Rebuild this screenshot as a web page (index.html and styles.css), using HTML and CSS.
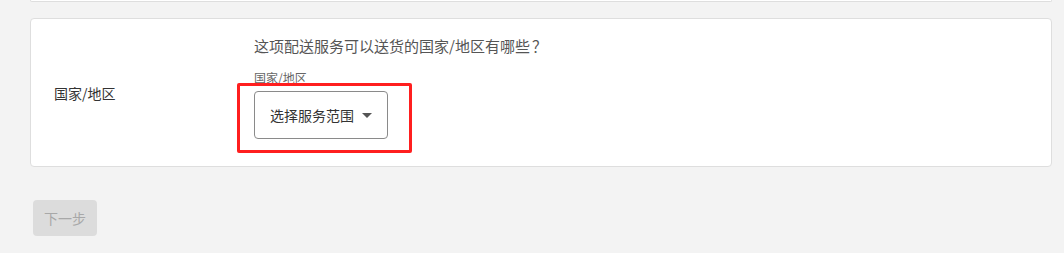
FILE: index.html
```html
<!DOCTYPE html>
<html lang="zh-CN">
<head>
<meta charset="utf-8">
<title>配送服务</title>
<link rel="stylesheet" href="styles.css">
</head>
<body>
<div class="page">
  <div class="card-prev"></div>
  <div class="card">
    <div class="row-label">国家/地区</div>
    <div class="row-body">
      <div class="question">这项配送服务可以送货的国家/地区有哪些<span class="punct">？</span></div>
      <div class="field-label">国家/地区</div>
      <div class="select-wrap">
        <div class="select">
          <span class="select-text">选择服务范围</span>
          <span class="caret"></span>
        </div>
        <div class="highlight"></div>
      </div>
    </div>
  </div>
  <div class="actions">
    <button class="btn-next" disabled>下一步</button>
  </div>
</div>
</body>
</html>
```

FILE: styles.css
```css
html, body {
  margin: 0;
  padding: 0;
  background: #f3f3f3;
  font-family: "Noto Sans CJK SC", "Noto Sans", "Liberation Sans", sans-serif;
  color: #333;
}

.page {
  padding: 0 12px 0 30px;
}

.card-prev {
  height: 1px;
  background: #fff;
  border: 1px solid #dedede;
  border-top: none;
  border-radius: 0 0 4px 4px;
}

.card {
  margin-top: 16px;
  background: #fff;
  border: 1px solid #dedede;
  border-radius: 4px;
  display: grid;
  grid-template-columns: 200px 1fr;
  align-items: center;
  padding: 0 0 0 23px;
}

.row-label {
  font-size: 14px;
  line-height: 20px;
  color: #333;
}

.row-body {
  display: flex;
  flex-direction: column;
  align-items: flex-start;
  padding: 16px 0 27px;
}

.question {
  font-size: 15px;
  line-height: 22px;
  color: #555;
}

.punct {
  font-family: "Noto Sans CJK TC", "Noto Sans CJK SC", sans-serif;
  margin-left: 2px;
}

.field-label {
  margin-top: 13px;
  font-size: 12px;
  line-height: 16px;
  color: #666;
}

.select-wrap {
  position: relative;
  margin-top: 5px;
}

.select {
  box-sizing: border-box;
  width: 134px;
  height: 48px;
  border: 1px solid #8a8a8a;
  border-radius: 4px;
  padding: 0 15px;
  display: flex;
  align-items: center;
  justify-content: space-between;
}

.select-text {
  font-size: 14px;
  color: #333;
}

.caret {
  width: 0;
  height: 0;
  border-left: 5px solid transparent;
  border-right: 5px solid transparent;
  border-top: 5px solid #555;
}

.highlight {
  position: absolute;
  left: -17px;
  top: -8px;
  width: 175px;
  height: 70px;
  box-sizing: border-box;
  border: 3px solid #ff1f1f;
  border-radius: 2px;
}

.actions {
  margin-top: 33px;
  padding-left: 3px;
}

.btn-next {
  width: 64px;
  height: 36px;
  border: none;
  border-radius: 4px;
  background: #dcdcdc;
  color: #a8a8a8;
  font-family: inherit;
  font-size: 14px;
  padding: 0;
}
```
